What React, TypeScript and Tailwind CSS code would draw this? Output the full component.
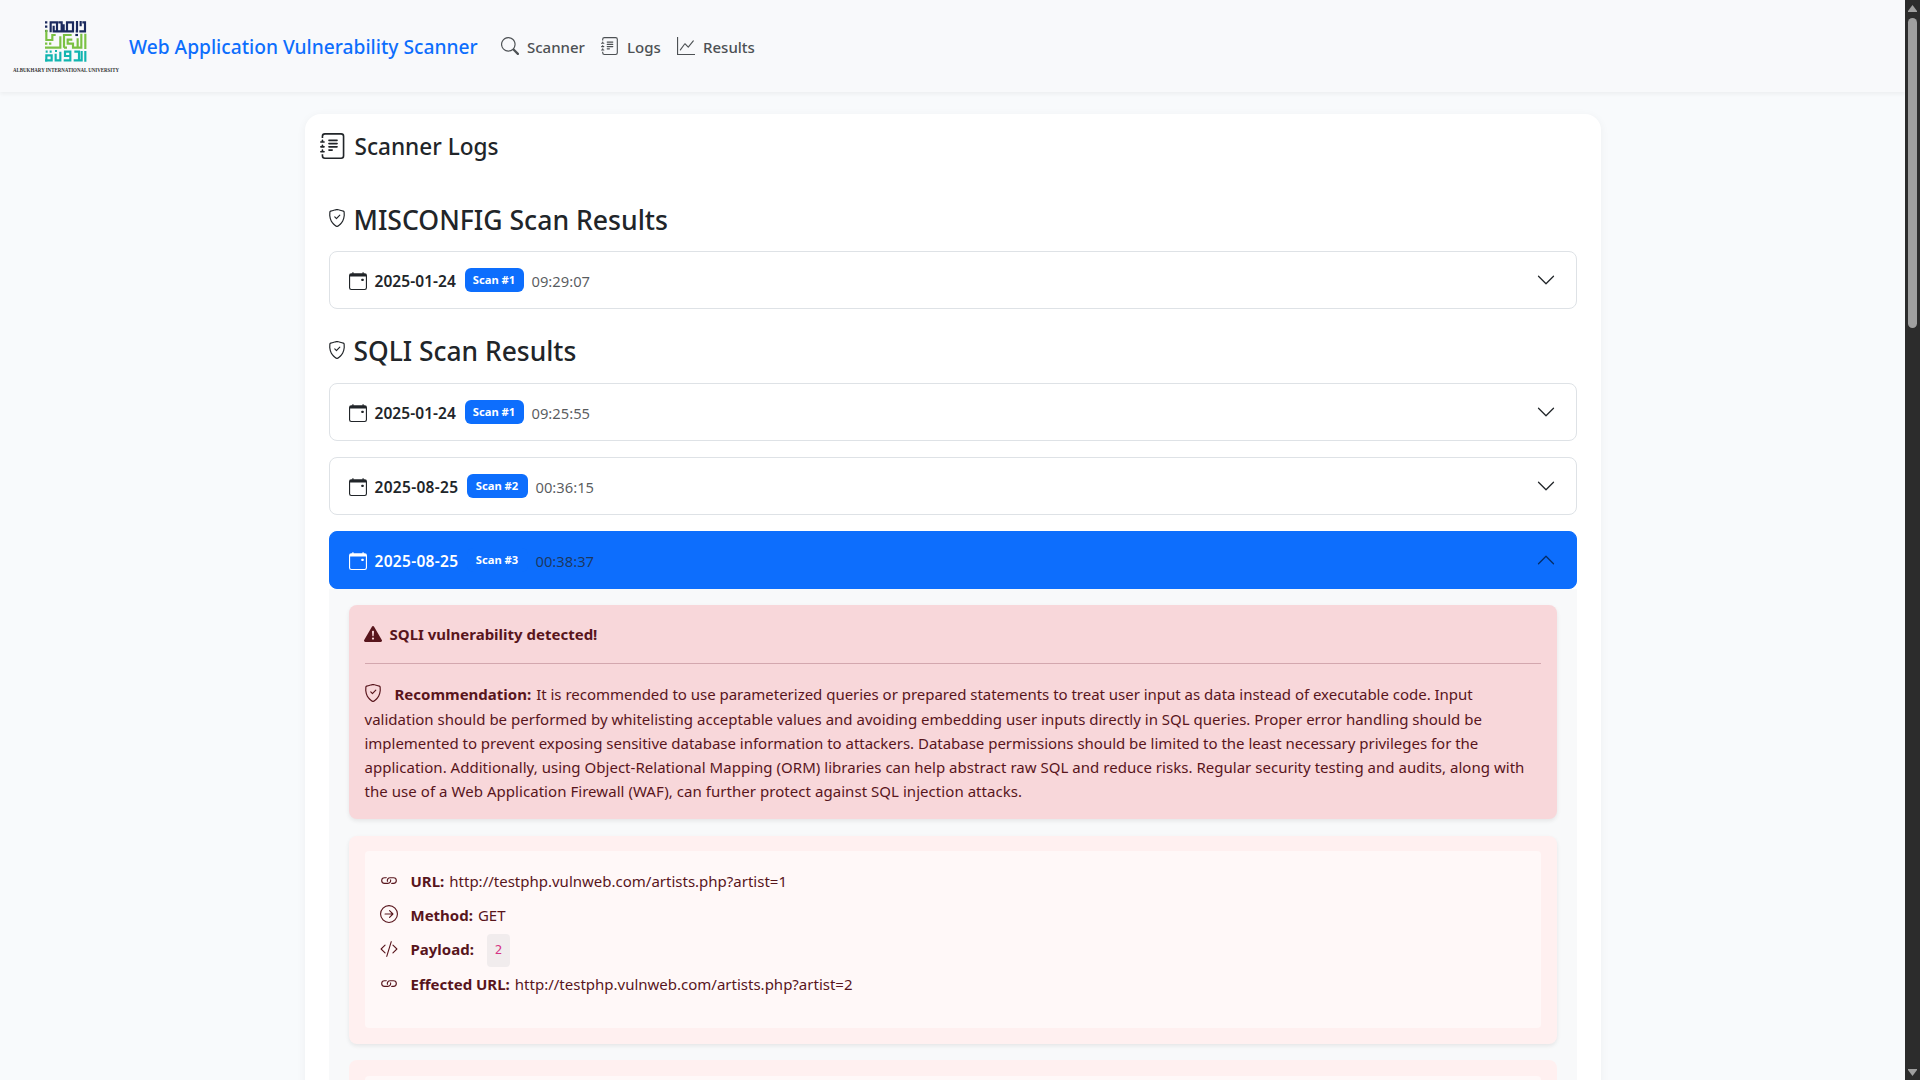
import type { ReactNode } from "react";
import {
  BsArrowRightCircle,
  BsCalendarEvent,
  BsCodeSlash,
  BsExclamationTriangleFill,
  BsGraphUp,
  BsJournalText,
  BsLink,
  BsSearch,
  BsShieldCheck,
} from "react-icons/bs";

function Logo() {
  return (
    <svg viewBox="0 0 112 60" className="h-[60px] w-28 shrink-0" fill="none">
      <g transform="translate(33 5) scale(0.3333)" strokeWidth="6.5">
        <g stroke="#1b2a5e">
          <path d="M0 4H7M0 17H7M0 30H7" />
          <path d="M17 34V4H36V31M26 14V31H84V4H66V31M50 31V4H40M50 4V20M56 31V10M96 0V31H92M107 0V16M103 31H120V4H112" />
          <path d="M91 42H99" />
        </g>
        <g stroke="#7ac143">
          <path d="M4 26V57H22V42H32M0 68H7M12 68H19M24 80H46V46M0 80H24M57 80V42H80M57 80H66M82 56H68V68H84V80H98V52M84 80H109V38M121 38V84" />
        </g>
        <g stroke="#12b5b0">
          <path d="M4 122V103H20V118H0M2 92H8M14 92H20M32 98V118H46V92M56 118H76V92H60V105H76M86 118H102V92H88M98 118H110V90M121 90V122M30 90H36" />
        </g>
      </g>
      <text
        x="1"
        y="55.5"
        textLength="106"
        lengthAdjust="spacingAndGlyphs"
        fill="#333"
        className="font-['Liberation_Serif',serif] text-[5.5px] font-bold"
      >
        ALBUKHARY INTERNATIONAL UNIVERSITY
      </text>
    </svg>
  );
}

function NavItem({ icon, children, className }: { icon: ReactNode; children: ReactNode; className: string }) {
  return (
    <a className={`flex items-center gap-2 text-[15px] font-medium text-[#4d5154] ${className}`}>
      <span className="text-lg">{icon}</span>
      <span className="pt-0.5 leading-6">{children}</span>
    </a>
  );
}

function Chevron({ open }: { open?: boolean }) {
  return (
    <svg
      viewBox="0 0 16 16"
      className={open ? "ml-auto size-5 rotate-180 text-[#052c65]" : "ml-auto size-5 text-[#212529]"}
      fill="none"
      stroke="currentColor"
      strokeLinecap="round"
      strokeLinejoin="round"
    >
      <path d="m2 5 6 6 6-6" />
    </svg>
  );
}

type Scan = { date: string; number: number; time: string; dateClass: string; badgeClass: string };

function ScanRow({ date, number, time, dateClass, badgeClass, open }: Scan & { open?: boolean }) {
  return (
    <div
      className={`flex h-[58px] items-center rounded-lg border pr-5 pl-[19px] ${
        open ? "border-[#0d6efd] bg-[#0d6efd] text-white" : "border-[#dee2e6] bg-white text-[#212529]"
      }`}
    >
      <BsCalendarEvent className="mr-2 mt-0.5 size-[18px] shrink-0" />
      <span className={`pt-px text-[15.5px] leading-6 font-semibold ${dateClass}`}>{date}</span>
      <span
        className={`mr-2 flex h-6 items-center justify-center rounded-md bg-[#0d6efd] pt-px text-[11.2px] font-bold text-white ${badgeClass}`}
      >
        Scan #{number}
      </span>
      <span className="pt-px text-[14.75px] leading-6 text-[#212529]/75">{time}</span>
      <Chevron open={open} />
    </div>
  );
}

function SectionTitle({ children, className }: { children: ReactNode; className: string }) {
  return (
    <h2 className="flex h-[34px] items-center gap-2 font-medium">
      <BsShieldCheck className="-ml-px -mt-0.5 size-[18px] shrink-0" />
      <span className={`whitespace-nowrap ${className}`}>{children}</span>
    </h2>
  );
}

function Detail({ icon, label, children, className }: { icon: ReactNode; label: string; children: ReactNode; className: string }) {
  return (
    <div className={`flex items-center ${className}`}>
      <span className="-ml-px mr-[13px] text-lg">{icon}</span>
      <span className="flex items-center gap-[5px] pt-0.5">
        <strong>{label}</strong>
        {children}
      </span>
    </div>
  );
}

const recommendation = [
  {
    text: "validation should be performed by whitelisting acceptable values and avoiding embedding user inputs directly in SQL queries. Proper error handling should be",
    className: "tracking-[0.008px]",
  },
  {
    text: "implemented to prevent exposing sensitive database information to attackers. Database permissions should be limited to the least necessary privileges for the",
    className: "tracking-[-0.018px]",
  },
  {
    text: "application. Additionally, using Object-Relational Mapping (ORM) libraries can help abstract raw SQL and reduce risks. Regular security testing and audits, along with",
    className: "tracking-[0.026px]",
  },
  {
    text: "the use of a Web Application Firewall (WAF), can further protect against SQL injection attacks.",
    className: "tracking-[0.05px]",
  },
];

const first = { dateClass: "w-[90px] tracking-[0.06px]", badgeClass: "w-[59px]" };
const wide = { dateClass: "w-[92px] tracking-[0.3px]", badgeClass: "w-[61px]" };

export default function App() {
  return (
    <div className="flex h-[1080px] w-[1920px] overflow-hidden bg-[#f8f9fa] font-['Noto_Sans',sans-serif] text-[15px] text-[#212529]">
      <div className="flex min-w-0 flex-1 flex-col overflow-hidden bg-[#f8fafc]">
        <nav className="flex h-[92px] shrink-0 items-center bg-[#f8f9fb] pl-3 shadow-[0_2px_4px_rgba(0,0,0,0.05)]">
          <Logo />
          <span className="ml-[5px] w-[372px] pt-0.5 text-[19.2px] font-medium whitespace-nowrap text-[#0d6efd]">
            Web Application Vulnerability Scanner
          </span>
          <NavItem icon={<BsSearch />} className="w-[100px]">
            Scanner
          </NavItem>
          <NavItem icon={<BsJournalText />} className="w-[76px]">
            Logs
          </NavItem>
          <NavItem icon={<BsGraphUp />} className="">
            Results
          </NavItem>
        </nav>

        <main className="mx-auto mt-[22px] h-[1100px] w-[1296px] shrink-0 rounded-2xl bg-white shadow-[0_2px_10px_rgba(0,0,0,0.05)]">
          <header className="flex h-[64px] items-center gap-[9px] pl-[15px]">
            <BsJournalText className="size-[26px]" />
            <h1 className="pt-0.5 text-[22.6px] font-medium">Scanner Logs</h1>
          </header>

          <div className="px-6 pt-6">
            <SectionTitle className="pt-1 text-[26.6px]">MISCONFIG Scan Results</SectionTitle>
            <div className="mt-[15px]">
              <ScanRow date="2025-01-24" number={1} time="09:29:07" {...first} />
            </div>

            <div className="mt-[25px]">
              <SectionTitle className="pt-0.5 text-[26.4px]">SQLI Scan Results</SectionTitle>
            </div>
            <div className="mt-[15px] flex flex-col gap-4">
              <ScanRow date="2025-01-24" number={1} time="09:25:55" {...first} />
              <ScanRow date="2025-08-25" number={2} time="00:36:15" {...wide} />
              <ScanRow date="2025-08-25" number={3} time="00:38:37" {...wide} open />
            </div>

            <div className="flex flex-col bg-[#f8f9fa] px-5 py-4 text-[#58151c]">
              <section className="h-[214px] rounded-lg bg-[#f8d7da] px-4 pt-[17px] shadow-[0_2px_4px_rgba(0,0,0,0.08)]">
                <div className="-ml-px flex h-6 items-center gap-2">
                  <BsExclamationTriangleFill className="size-[18px]" />
                  <strong className="pt-px">SQLI vulnerability detected!</strong>
                </div>
                <hr className="mt-[17px] border-[#d3a7ae]" />
                <div className="-ml-px mt-[18px] flex h-[25px] items-center whitespace-nowrap">
                  <BsShieldCheck className="-mt-1 mr-[13px] size-[18px]" />
                  <strong className="mr-[5px]">Recommendation:</strong>
                  <span className="tracking-[-0.02px]">
                    It is recommended to use parameterized queries or prepared statements to treat user input as data
                    instead of executable code. Input
                  </span>
                </div>
                {recommendation.map(({ text, className }) => (
                  <p key={text} className={`leading-6 whitespace-nowrap ${className}`}>
                    {text}
                  </p>
                ))}
              </section>

              <section className="mt-[17px] h-[208px] rounded-lg bg-[#fff0f0] px-4 pt-[15px] shadow-[0_2px_4px_rgba(0,0,0,0.08)]">
                <div className="h-[177px] rounded bg-[#fff8f8] px-4 pt-3">
                  <Detail icon={<BsLink />} label="URL:" className="h-[34px]">
                    http://testphp.vulnweb.com/artists.php?artist=1
                  </Detail>
                  <Detail icon={<BsArrowRightCircle />} label="Method:" className="h-[34px]">
                    GET
                  </Detail>
                  <Detail icon={<BsCodeSlash />} label="Payload:" className="h-[35px]">
                    <code className="relative top-px ml-2 flex h-[33px] w-[23px] items-center justify-center rounded bg-[#f1eced] font-['DejaVu_Sans_Mono',monospace] text-[12.5px] text-[#d63384]">
                      2
                    </code>
                  </Detail>
                  <Detail icon={<BsLink />} label="Effected URL:" className="h-[34px]">
                    http://testphp.vulnweb.com/artists.php?artist=2
                  </Detail>
                </div>
              </section>

              <section className="mt-4 h-[208px] rounded-lg bg-[#fff0f0] px-4 pt-4">
                <div className="h-[177px] rounded bg-[#fff8f8]" />
              </section>
            </div>
          </div>
        </main>
      </div>

      <aside className="flex w-[15px] flex-col items-center bg-[#2c2c2c] pt-[5px] pb-1">
        <svg viewBox="0 0 9 7" className="h-[7px] w-[9px] shrink-0 fill-[#9f9f9f]">
          <path d="M4.500 0 9 6V7H0V6Z" />
        </svg>
        <div className="mt-1.5 h-[310px] w-[9px] rounded-full bg-[#9f9f9f]" />
        <svg viewBox="0 0 9 7" className="mt-auto h-[7px] w-[9px] shrink-0 fill-[#9f9f9f]">
          <path d="M4.500 7 9 1V0H0V1Z" />
        </svg>
      </aside>
    </div>
  );
}
